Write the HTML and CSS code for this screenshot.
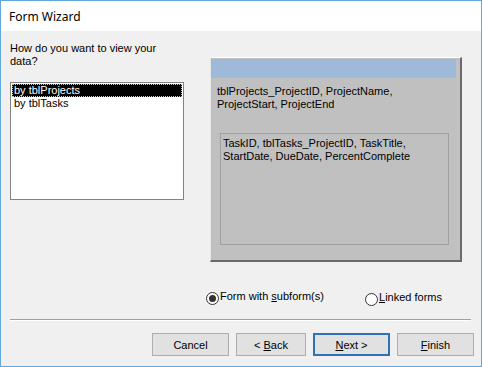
FILE: index.html
```html
<!DOCTYPE html>
<html lang="en">
<head>
  <meta charset="UTF-8">
  <title>Form Wizard</title>
  <link rel="stylesheet" href="styles.css">
</head>
<body>
  <div class="window">
    <div class="titlebar">Form Wizard</div>
    <div class="content">
      <div class="main">
        <div class="left">
          <div class="question">How do you want to view your<br>data?</div>
          <div class="listbox">
            <div class="item selected">by tblProjects</div>
            <div class="item">by tblTasks</div>
          </div>
        </div>
        <div class="preview">
          <div class="preview-head"></div>
          <div class="preview-fields">tblProjects_ProjectID, ProjectName,<br>ProjectStart, ProjectEnd</div>
          <div class="subform">TaskID, tblTasks_ProjectID, TaskTitle,<br>StartDate, DueDate, PercentComplete</div>
        </div>
      </div>

      <div class="options">
        <label class="radio radio-sub"><span class="dot checked"></span><span>Form with <u>s</u>ubform(s)</span></label>
        <label class="radio radio-linked"><span class="dot"></span><span><u>L</u>inked forms</span></label>
      </div>

      <div class="separator"></div>

      <div class="buttons">
        <button class="btn btn-cancel">Cancel</button>
        <button class="btn btn-back">&lt; <u>B</u>ack</button>
        <button class="btn btn-next"><u>N</u>ext &gt;</button>
        <button class="btn btn-finish"><u>F</u>inish</button>
      </div>
    </div>
  </div>
</body>
</html>
```

FILE: styles.css
```css
* {
  margin: 0;
  padding: 0;
  box-sizing: border-box;
}

body {
  width: 482px;
  height: 367px;
  font-family: "Liberation Sans", Arial, sans-serif;
  font-size: 11px;
  color: #000;
}

.window {
  width: 482px;
  height: 367px;
  border: 1px solid #62a8dc;
  display: flex;
  flex-direction: column;
  background-color: #f0f0f0;
}

.titlebar {
  height: 30px;
  background-color: #fff;
  padding-left: 8px;
  line-height: 31px;
  font-family: "Noto Sans", "Open Sans", sans-serif;
  font-size: 12px;
  color: #000;
}

.content {
  flex: 1;
}

.main {
  display: flex;
  padding-left: 9px;
}

.left {
  width: 174px;
  padding-top: 11px;
}

.question {
  line-height: 13px;
  height: 26px;
}

.listbox {
  margin-top: 14px;
  height: 118px;
  background-color: #fff;
  border: 1px solid #828282;
  padding: 1px 0 0 0;
}

.item {
  height: 13px;
  line-height: 13px;
  padding-left: 2px;
  margin: 0 1px;
}

.item.selected {
  background-color: #000;
  color: #fff;
  outline: 1px dotted #c8c8a0;
  outline-offset: -1px;
}

.preview {
  margin-left: 26px;
  margin-top: 26px;
  width: 252px;
  height: 205px;
  background-color: #c0c0c0;
  border-top: 1px solid #fff;
  border-left: 1px solid #e6e6e6;
  border-right: 2px solid #6a6a6a;
  border-bottom: 2px solid #6a6a6a;
  padding: 1px 0 0 0;
}

.preview-head {
  height: 19px;
  margin-right: 4px;
  background-color: #9fbad8;
}

.preview-fields {
  padding: 7px 0 0 6px;
  line-height: 13px;
  height: 55px;
}

.subform {
  margin-left: 9px;
  width: 229px;
  height: 112px;
  border: 1px solid #a0a0a0;
  padding: 3px 0 0 2px;
  line-height: 13px;
}

.options {
  display: flex;
  height: 57px;
  padding-top: 28px;
}

.radio {
  display: flex;
  align-items: flex-start;
  line-height: 13px;
}

.radio-sub {
  margin-left: 205px;
  width: 159px;
}

.radio-linked {
  padding-top: 1px;
}

.dot {
  width: 13px;
  height: 13px;
  border: 1px solid #333;
  border-radius: 50%;
  background-color: #fff;
  margin-top: 2px;
  margin-right: 1px;
  position: relative;
}

.dot.checked::after {
  content: "";
  position: absolute;
  left: 2px;
  top: 2px;
  width: 7px;
  height: 7px;
  border-radius: 50%;
  background-color: #333;
}

.separator {
  margin: 0 10px 0 9px;
  height: 2px;
  border-top: 1px solid #a0a0a0;
  border-bottom: 1px solid #fff;
}

.buttons {
  display: flex;
  padding-left: 151px;
  margin-top: 12px;
}

.btn {
  height: 23px;
  width: 77px;
  background-color: #e1e1e1;
  border: 1px solid #adadad;
  font-family: "Liberation Sans", Arial, sans-serif;
  font-size: 11px;
  color: #000;
}

.btn-back {
  margin-left: 7px;
  width: 70px;
}

.btn-next {
  margin-left: 7px;
  width: 77px;
  border: 2px solid #2b72b8;
}

.btn-finish {
  margin-left: 7px;
}
```
